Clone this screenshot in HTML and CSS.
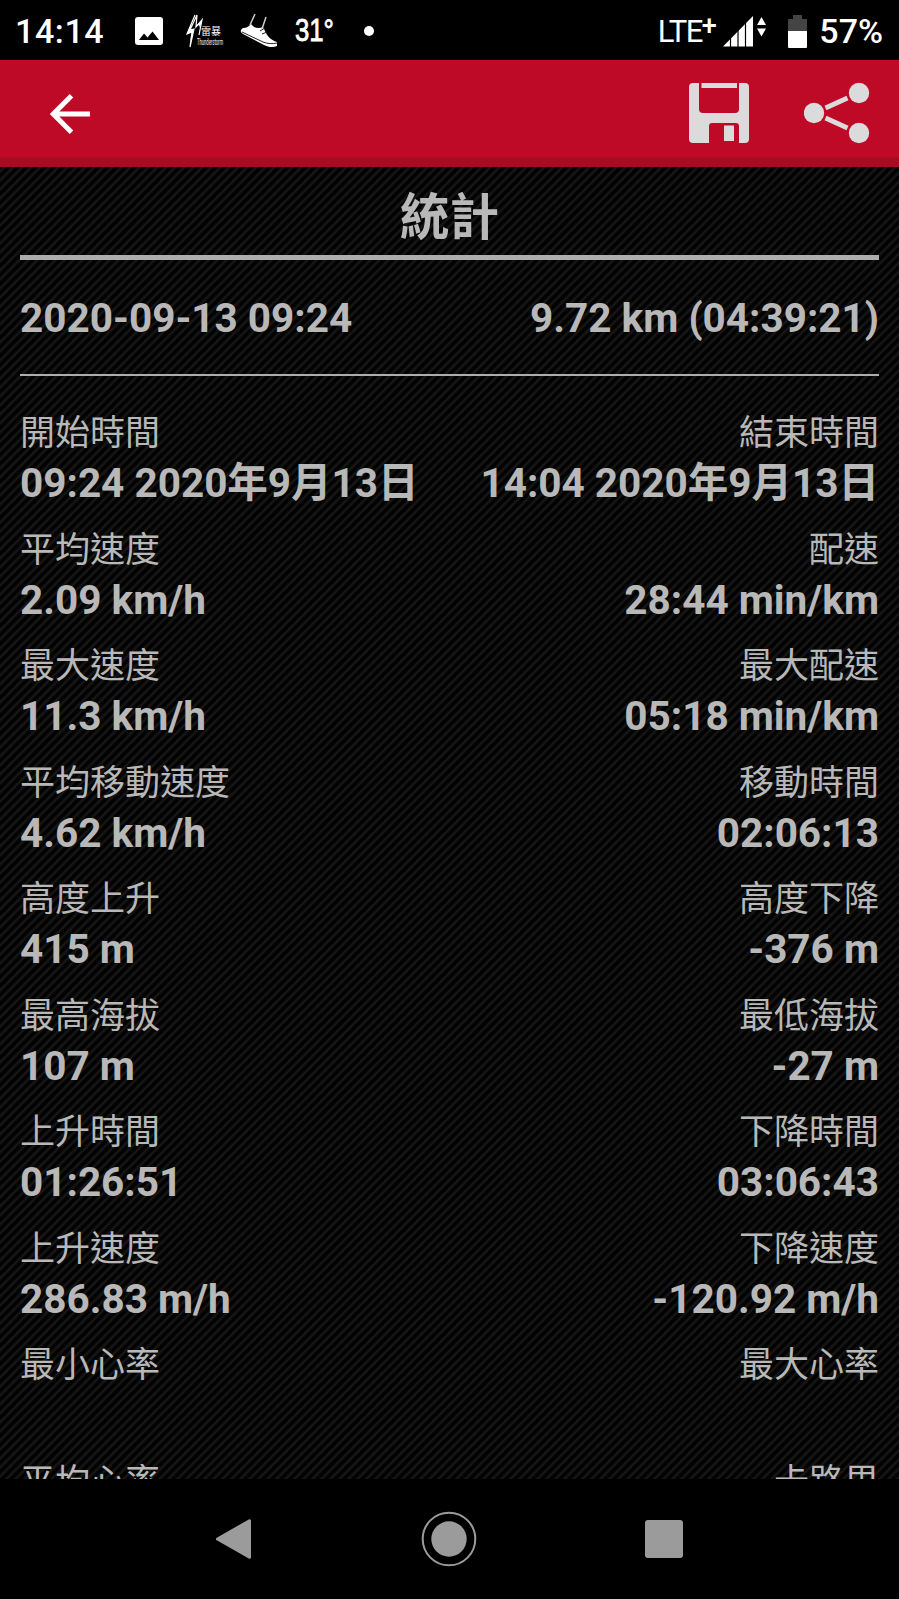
FILE: index.html
```html
<!DOCTYPE html>
<html lang="zh-Hant">
<head>
  <meta charset="UTF-8">
  <title>統計</title>
  <link rel="stylesheet" href="styles.css">
</head>
<body>
  <div class="status-bar">
    <span class="clock">14:14</span>
    <svg class="ic-image" viewBox="0 0 28 28"><path fill="#fff" fill-rule="evenodd" d="M3 0h22a3 3 0 0 1 3 3v22a3 3 0 0 1-3 3H3a3 3 0 0 1-3-3V3a3 3 0 0 1 3-3zM4 23h20l-6.500-8.500-5 6-3.500-4z"/></svg>
    <div class="thunder">
      <svg viewBox="0 0 18 34"><path fill="none" stroke="#fff" stroke-width="1.200" d="M9 1L1 20l5-2-2 15 4-18-4 1L11 1l-1 12 6-7-3 15"/><path fill="#fff" d="M6 8L1 20l5-2-2 10 4-13-4 1zM9 13l7-7-2 8-1-3z"/></svg>
      <div class="thunder-text"><b>雷暴</b><i>Thunderstorm</i></div>
    </div>
    <svg class="ic-shoe" viewBox="0 0 38 34"><path fill="#fff" d="M3 14c4 0 6-2 8-4 3 4 7 5 12 3l3 6c2 4 5 7 11 9v4c-4 2-9 1-13-1L3 20c-3-2-3-4 0-6z"/><path fill="none" stroke="#222" stroke-width="1" d="M2 18l21 10c5 2 10 2 14 1"/><path fill="none" stroke="#ccc" stroke-width="1.500" d="M15 0l-5 11M26 3l-4 12"/><path stroke="#222" stroke-width="1" d="M20 17l5-3M22 20l5-2"/></svg>
    <span class="temp">31°</span>
    <span class="dot"></span>
    <span class="lte">LTE<sup>+</sup></span>
    <svg class="ic-signal" viewBox="0 0 44 31"><path fill="#fff" d="M0 30.500L30 0v30.500z"/><path stroke="#000" stroke-width="1.200" d="M7.500 15v16M15 8v23M22.500 3v28"/><path fill="#fff" d="M34 9l4.500-8L43 9zM34 12.500h9l-4.500 8z"/></svg>
    <svg class="ic-battery" viewBox="0 0 19 33"><path fill="#444" d="M5 0h9v4h5v12H0V4h5z"/><path fill="#fff" d="M0 16h19v16a1 1 0 0 1-1 1H1a1 1 0 0 1-1-1z"/></svg>
    <span class="percent">57%</span>
  </div>

  <div class="app-bar">
    <svg class="ic-back" viewBox="0 0 40 40"><path fill="none" stroke="#fff" stroke-width="5" d="M40 20H4M21.500 1.800L3.300 20l18.200 18.200"/></svg>
    <svg class="ic-save" viewBox="0 0 60 60"><path fill="#dbdbdb" d="M4 0h6v26a4 4 0 0 0 4 4h32a4 4 0 0 0 4-4V0h6a4 4 0 0 1 4 4v52a4 4 0 0 1-4 4h-6V43a3 3 0 0 0-3-3H23a3 3 0 0 0-3 3v17H4a4 4 0 0 1-4-4V4a4 4 0 0 1 4-4zM12.500 0h35.500v5H12.500zM35 42.500h10V58H35z"/></svg>
    <svg class="ic-share" viewBox="0 0 66 62"><g fill="#dbdbdb"><circle cx="10" cy="31" r="10.200"/><circle cx="55" cy="11" r="10.200"/><circle cx="55" cy="51" r="10.200"/></g><path stroke="#dbdbdb" stroke-width="4.800" d="M21.500 26l22-10M21.500 36l22 10"/></svg>
  </div>

  <main class="stats">
    <h1>統計</h1>
    <div class="summary">
      <span>2020-09-13 09:24</span>
      <span>9.72 km (04:39:21)</span>
    </div>
    <dl class="grid">
      <div><dt>開始時間</dt><dd>09:24 2020年9月13日</dd></div>
      <div><dt>結束時間</dt><dd>14:04 2020年9月13日</dd></div>
      <div><dt>平均速度</dt><dd>2.09 km/h</dd></div>
      <div><dt>配速</dt><dd>28:44 min/km</dd></div>
      <div><dt>最大速度</dt><dd>11.3 km/h</dd></div>
      <div><dt>最大配速</dt><dd>05:18 min/km</dd></div>
      <div><dt>平均移動速度</dt><dd>4.62 km/h</dd></div>
      <div><dt>移動時間</dt><dd>02:06:13</dd></div>
      <div><dt>高度上升</dt><dd>415 m</dd></div>
      <div><dt>高度下降</dt><dd>-376 m</dd></div>
      <div><dt>最高海拔</dt><dd>107 m</dd></div>
      <div><dt>最低海拔</dt><dd>-27 m</dd></div>
      <div><dt>上升時間</dt><dd>01:26:51</dd></div>
      <div><dt>下降時間</dt><dd>03:06:43</dd></div>
      <div><dt>上升速度</dt><dd>286.83 m/h</dd></div>
      <div><dt>下降速度</dt><dd>-120.92 m/h</dd></div>
      <div><dt>最小心率</dt><dd></dd></div>
      <div><dt>最大心率</dt><dd></dd></div>
      <div><dt>平均心率</dt><dd></dd></div>
      <div><dt>卡路里</dt><dd></dd></div>
    </dl>
  </main>

  <nav class="nav-bar">
    <svg viewBox="0 0 56 56"><path fill="#9b9b9b" stroke="#9b9b9b" stroke-width="3" stroke-linejoin="round" d="M11.500 28L43.500 9.700v36.600z"/></svg>
    <svg viewBox="0 0 56 56"><circle cx="28" cy="28" r="26.300" fill="none" stroke="#9b9b9b" stroke-width="2"/><circle cx="28" cy="28" r="17.700" fill="#9b9b9b"/></svg>
    <svg viewBox="0 0 56 56"><rect x="9" y="9" width="38" height="38" rx="3" fill="#9b9b9b"/></svg>
  </nav>
</body>
</html>
```
FILE: styles.css
```css
:root {
  --red: #be0a26;
  --text: #b8b8b8;
}
* { box-sizing: border-box; }
body {
  margin: 0;
  width: 899px;
  height: 1599px;
  display: flex;
  flex-direction: column;
  overflow: hidden;
  background: #000;
  color: var(--text);
  font-family: Roboto, "Noto Sans CJK TC", sans-serif;
}
svg {
  display: block;
  flex: none;
}

/* status bar */
.status-bar {
  flex: none;
  display: flex;
  align-items: center;
  height: 60px;
  padding: 2px 16px 0 15px;
  color: #fff;
  white-space: nowrap;
}
.clock {
  width: 120px;
  font-size: 34px;
  font-weight: 500;
  letter-spacing: 0.6px;
}
.ic-image { width: 28px; height: 28px; }
.thunder {
  display: flex;
  align-items: flex-end;
  width: 54px;
  margin-left: 23px;
}
.thunder svg { width: 18px; height: 34px; }
.thunder-text {
  width: 26px;
  margin-left: -7px;
}
.thunder-text b {
  display: block;
  padding-left: 4px;
  font-size: 10px;
  font-weight: 400;
  line-height: 10px;
}
.thunder-text i {
  display: block;
  font-size: 9px;
  font-style: normal;
  line-height: 11px;
  transform: scaleX(0.46);
  transform-origin: left;
}
.ic-shoe { width: 38px; height: 34px; }
.temp {
  width: 69px;
  margin-left: 17px;
  font-family: "Liberation Sans", sans-serif;
  font-size: 31px;
  transform: scaleX(0.83);
  transform-origin: left;
  -webkit-text-stroke: 0.8px #fff;
}
.dot {
  width: 10px;
  height: 10px;
  border-radius: 50%;
  background: #fff;
}
.lte {
  margin-left: auto;
  font-size: 31px;
  letter-spacing: -1.5px;
}
.lte sup {
  font-size: 27px;
  font-weight: 500;
  line-height: 0;
  vertical-align: 7px;
}
.ic-signal { width: 44px; height: 31px; margin-left: 8px; }
.ic-battery { width: 19px; height: 33px; margin-left: 21px; }
.percent {
  margin-left: 12px;
  font-size: 34px;
  font-weight: 500;
}

/* app bar */
.app-bar {
  flex: none;
  display: flex;
  align-items: center;
  height: 107px;
  padding: 0 29px 1px 50px;
  background: linear-gradient(var(--red) 97px, #a50e22 98px);
}
.ic-back { width: 40px; height: 40px; margin-top: 1px; }
.ic-save { width: 60px; height: 60px; margin-left: auto; }
.ic-share { width: 66px; height: 62px; margin-left: 55px; }

/* statistics */
.stats {
  flex: 1;
  min-height: 0;
  overflow: hidden;
  padding: 0 20px;
  background: linear-gradient(135deg, #020202 8%, #1b1a19 25%, #020202 42%, #020202 58%, #1b1a19 75%, #020202 92%) 0 0 / 9px 9px;
}
h1 {
  height: 93px;
  margin: 0;
  border-bottom: 5px solid #adadad;
  font-size: 49.500px;
  font-weight: 700;
  line-height: 103px;
  text-align: center;
}
.summary {
  display: flex;
  justify-content: space-between;
  height: 116px;
  border-bottom: 2px solid #adadad;
  font-size: 40.500px;
  font-weight: 700;
  line-height: 117px;
}
.grid {
  display: grid;
  grid-template-columns: auto auto;
  grid-auto-rows: 116.500px;
  justify-content: space-between;
  margin: 32px 0 0;
}
.grid div:nth-child(even) { text-align: right; }
dt {
  font-size: 35px;
  line-height: 51px;
}
dd {
  margin: -1px 0 0;
  font-size: 40.500px;
  font-weight: 700;
  line-height: 51px;
}

/* navigation bar */
.nav-bar {
  flex: none;
  display: flex;
  justify-content: center;
  align-items: center;
  gap: 159px;
  height: 120px;
  padding-right: 1px;
}
.nav-bar svg { width: 56px; height: 56px; }
```
